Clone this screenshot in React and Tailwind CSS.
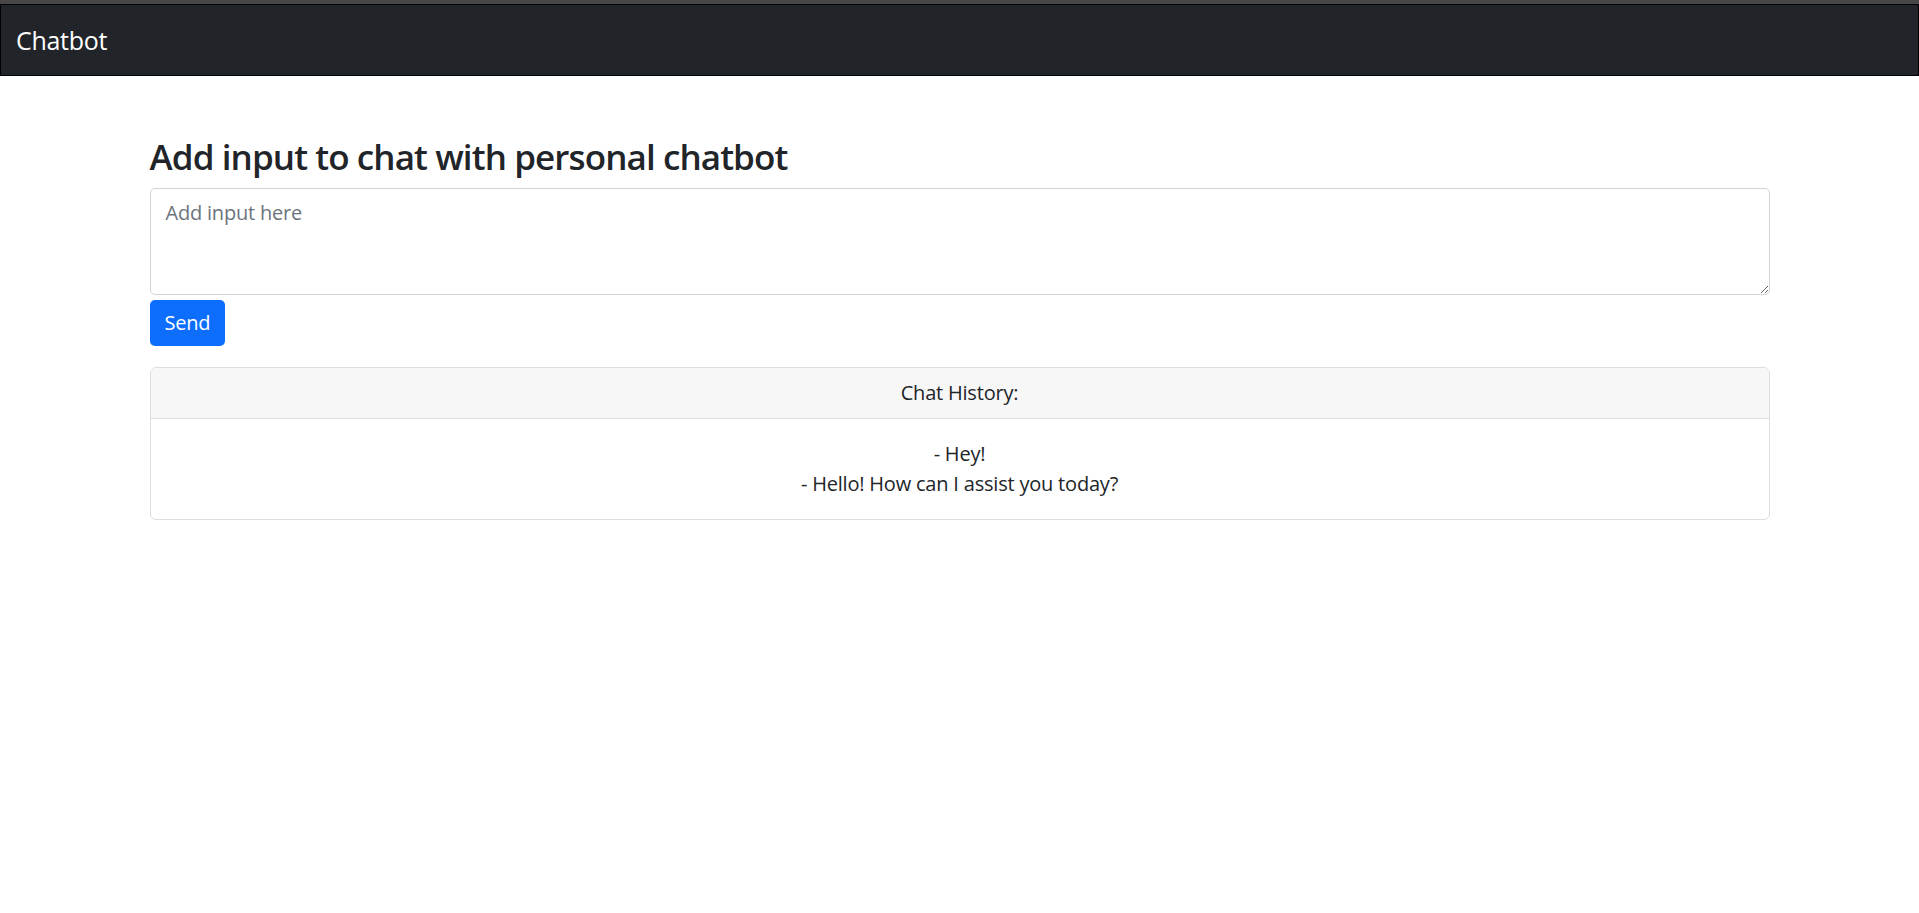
const HISTORY = ["- Hey!", "- Hello! How can I assist you today?"];

export default function App() {
  return (
    <div className="min-h-screen bg-white text-[#212529] font-['Open_Sans','Noto_Sans',sans-serif] text-[20px] leading-[1.5]">
      <div className="h-[4px] bg-[#474747]" />
      <nav className="bg-[#212529] border border-black">
        <div className="px-[15px] py-[10px]">
          <a href="#" className="block py-[6px] text-[25px] leading-[38px] text-white tracking-[-0.3px]">
            Chatbot
          </a>
        </div>
      </nav>

      <div className="w-[1620px] mx-auto mt-[60px]">
        <h3 className="text-[35px] leading-[42px] font-semibold mb-[10px] tracking-[-0.9px]">
          Add input to chat with personal chatbot
        </h3>
        <textarea
          rows={3}
          placeholder="Add input here"
          className="block w-full h-[107px] border border-[#ced4da] rounded-[5px] px-[15px] pt-[9px] pb-[7px] tracking-[-0.2px] placeholder:text-[#6c757d] outline-none"
        />
        <button className="mt-[5px] bg-[#0d6efd] text-white rounded-[5px] px-[15px] py-[8px] leading-[30px] tracking-[-0.2px]">
          Send
        </button>

        <div className="mt-[21px] border border-[#dfdfdf] rounded-[6px] text-center tracking-[-0.2px]">
          <div className="bg-[#f7f7f7] border-b border-[#dfdfdf] py-[10px] px-[20px] rounded-t-[6px]">
            Chat History:
          </div>
          <div className="p-[20px]">
            {HISTORY.map((line, i) => (
              <div key={i}>{line}</div>
            ))}
          </div>
        </div>
      </div>
    </div>
  );
}
